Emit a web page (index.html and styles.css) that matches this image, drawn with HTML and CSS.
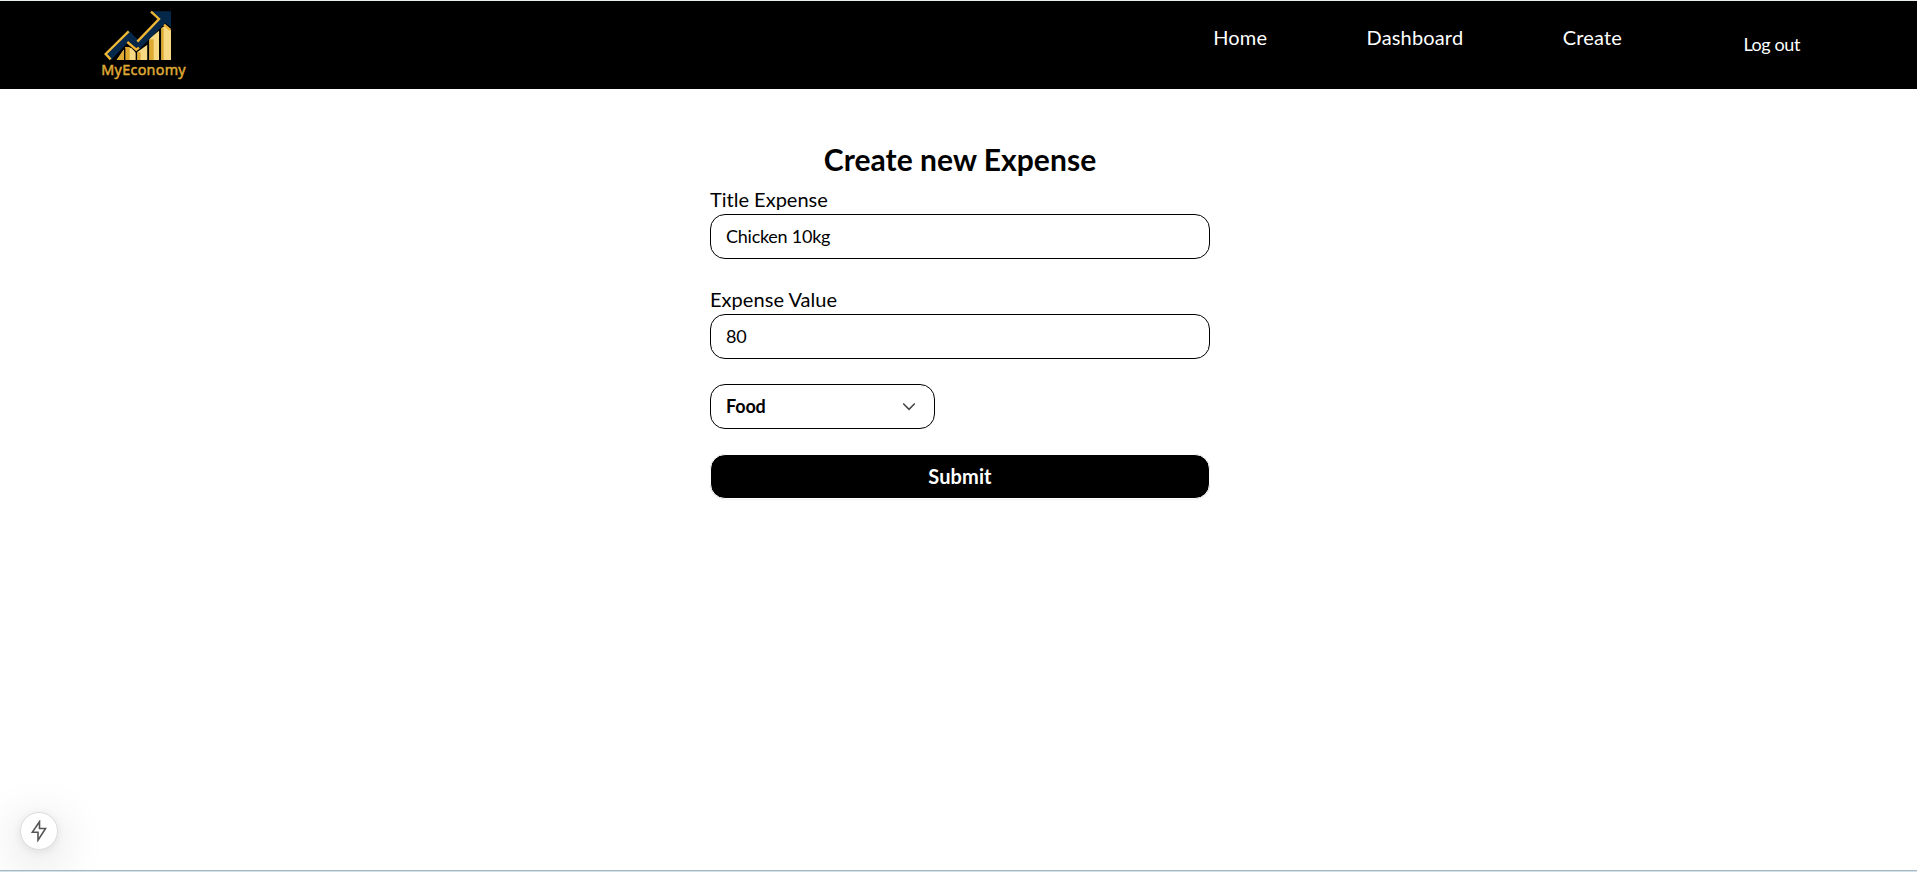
FILE: index.html
```html
<!DOCTYPE html>
<html lang="en">
<head>
<meta charset="utf-8">
<title>MyEconomy</title>
<link rel="stylesheet" href="styles.css">
</head>
<body>
<header class="header">
  <svg class="logo" viewBox="0 0 330 264" role="img" aria-label="MyEconomy">
    <g fill="#f6d982">
      <path d="M80 180 101 149V180Z"/>
      <path d="M106 180V141L124 144 138 158V180Z"/>
      <path d="M142 180V156L172 134V180Z"/>
      <path d="M178 180V116L207 92V180Z"/>
      <path d="M214 180V84L226 77 243 91V180Z"/>
    </g>
    <g fill="#dda930">
      <path d="M80 180 101 149 106 155V180Z"/>
      <path d="M106 141H119V180H106Z"/>
      <path d="M142 157H152V180H142Z"/>
      <path d="M178 118H191V180H178Z"/>
      <path d="M214 84H221V180H214Z"/>
    </g>
    <path d="M104 145V180M139 155V180M175 130V180M211 92V180" stroke="#000" stroke-width="4"/>
    <path d="M45 161 115 91 147 122 205 57 183 34H243V82L226 69 145 151 117 124 64 179Z" fill="#05284a"/>
    <path d="M62 178 47 162 116 94M183 35 207 57 142 125M112 126 139 149 147 143M222 74 241 90" fill="none" stroke="#efb735" stroke-width="7"/>
    <text x="34" y="226" textLength="253" lengthAdjust="spacing">MyEconomy</text>
  </svg>
  <nav class="nav">
    <a class="link">Home</a>
    <a class="link">Dashboard</a>
    <a class="link">Create</a>
    <a class="logout">Log out</a>
  </nav>
</header>
<main class="main">
  <form class="form">
    <h1 class="title">Create new Expense</h1>
    <label class="label" for="title">Title Expense</label>
    <input class="field" id="title" type="text" value="Chicken 10kg">
    <label class="label label-next" for="value">Expense Value</label>
    <input class="field" id="value" type="text" value="80">
    <button class="select" type="button">Food
      <svg class="chevron" viewBox="0 0 15 15"><path d="M3.15 5.6 7.5 10 11.85 5.6" fill="none" stroke="currentColor" stroke-width="1.1"/></svg>
    </button>
    <button class="submit" type="button">Submit</button>
  </form>
</main>
<div class="badge">
  <svg class="bolt" viewBox="0 0 16 22"><path d="M8.5 1.7 1.2 12.3H7V20.2L14.6 8.5H8.5Z" fill="none" stroke="currentColor" stroke-width="1.6"/></svg>
</div>
<div class="edge"></div>
</body>
</html>
```
FILE: styles.css
```css
* { box-sizing: border-box; }
body {
  margin: 0;
  height: 872px;
  display: flex;
  flex-direction: column;
  overflow: hidden;
  background: #fff;
  color: #000;
  font-family: Lato, sans-serif;
}
.header {
  flex: none;
  height: 89px;
  border-top: 1px solid #e8eeee;
  background: #000;
  color: #fff;
  display: flex;
  justify-content: space-between;
  padding: 0 117px 0 90px;
}
.logo { width: 110px; height: 88px; margin-top: -1px; }
.logo text {
  font: 400 43px "Noto Sans", sans-serif;
  fill: #dfa936;
  stroke: #dfa936;
  stroke-width: 1.5;
}
.nav { display: flex; align-items: flex-start; }
.link {
  font-size: 20px;
  line-height: 28px;
  margin: 22px 99.5px 0 0;
  letter-spacing: 0.15px;
}
.logout { font-size: 18px; line-height: 28px; margin: 29px 0 0 22px; letter-spacing: -0.4px; }
.main { flex: 1; display: flex; justify-content: center; padding-left: 3px; }
.form { width: 500px; padding-top: 52px; display: flex; flex-direction: column; }
.title {
  margin: 0;
  font-size: 30px;
  line-height: 36px;
  font-weight: 700;
  text-align: center;
  letter-spacing: 0.05px;
}
.label { font-size: 20px; line-height: 28px; margin: 8px 0 1px; }
.label-next { margin-top: 26px; letter-spacing: 0.05px; }
.field, .select, .submit { height: 45px; border-radius: 15px; font-family: inherit; color: #000; }
.field {
  width: 100%;
  border: 1px solid #000;
  background: #fff;
  padding: 0 15px 2px;
  font-size: 18px;
  letter-spacing: -0.25px;
}
.select {
  width: 225px;
  margin-top: 25px;
  padding: 0 15px 2px;
  border: 1px solid #000;
  background: #fff;
  display: flex;
  align-items: center;
  justify-content: space-between;
  font-size: 18px;
  font-weight: 700;
  letter-spacing: -0.15px;
}
.chevron { width: 20px; height: 20px; color: #444; }
.submit {
  margin-top: 25px;
  padding: 0 0 2px;
  border: 1px solid #fff;
  background: #000;
  color: #fff;
  font-size: 20px;
  font-weight: 700;
  letter-spacing: 0.1px;
  box-shadow: 0 1px 2px rgba(0, 0, 0, .05);
}
.badge {
  position: absolute;
  left: 20px;
  top: 812px;
  width: 38px;
  height: 38px;
  border: 1px solid #ddd;
  border-radius: 50%;
  background: #fff;
  color: #555;
  display: grid;
  place-items: center;
  box-shadow: 0 11px 50px rgba(0, 0, 0, .2), 0 2px 10px rgba(0, 0, 0, .08);
}
.bolt { width: 16px; height: 22px; }
.edge { flex: none; height: 2px; background: #d4e1e8; border-top: 1px solid #a9b9c3; position: relative; }
```
